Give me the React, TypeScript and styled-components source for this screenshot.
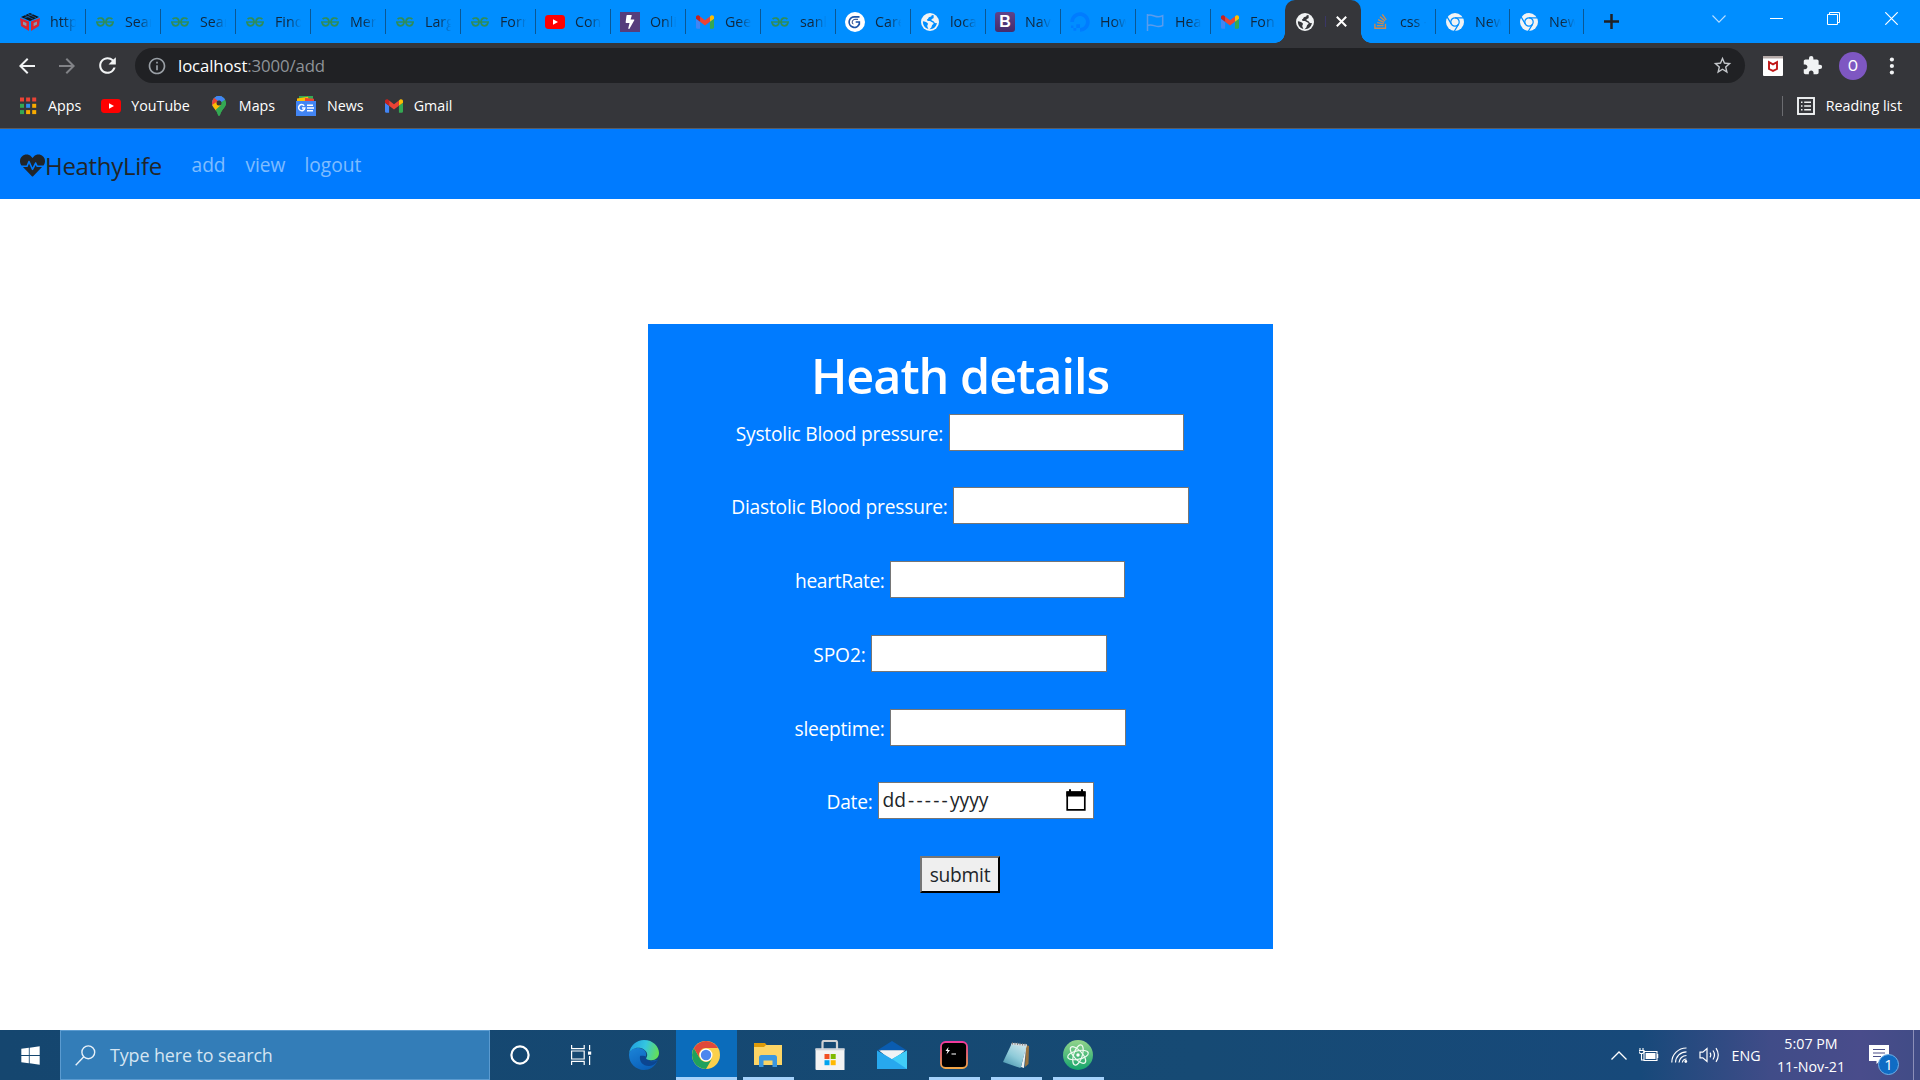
import React from "react";
import styled, { createGlobalStyle, css } from "styled-components";
import {
  MdArrowBack,
  MdArrowForward,
  MdRefresh,
  MdInfoOutline,
  MdStarBorder,
  MdExtension,
} from "react-icons/md";
import { FaHeartbeat, FaDigitalOcean, FaStackOverflow, FaWindows, FaBolt } from "react-icons/fa";

const Global = createGlobalStyle`
  *, *::before, *::after { box-sizing: border-box; }
  html, body { margin: 0; padding: 0; }
  body {
    background: #fff;
    font-family: "Open Sans", "Noto Sans", sans-serif;
    overflow: hidden;
  }
  svg { display: block; flex: none; }
`;

const Screen = styled.div`
  width: 1920px;
  height: 1080px;
  display: flex;
  flex-direction: column;
  background: #fff;
`;

/* ---------- tab strip ---------- */

const TabStrip = styled.div`
  display: flex;
  height: 43px;
  padding-left: 11px;
  background: #008eff;
`;

const Tab = styled.div<{ $w?: number; $last?: boolean }>`
  display: flex;
  align-items: center;
  width: ${(p) => p.$w ?? 75}px;
  height: 43px;
  padding-left: 9px;
  background: ${(p) =>
    p.$last
      ? "none"
      : "linear-gradient(#0b5794, #0b5794) right 0 top 9px / 1.5px 25px no-repeat"};
`;

const Favicon = styled.span`
  display: flex;
  align-items: center;
  justify-content: center;
  width: 20px;
  height: 20px;
  margin-right: 10px;
  flex: none;
`;

const TabTitle = styled.span`
  width: 27px;
  overflow: hidden;
  white-space: nowrap;
  font-size: 14.25px;
  line-height: 22px;
  color: #10273d;
  -webkit-mask-image: linear-gradient(90deg, #000 50%, transparent 98%);
  mask-image: linear-gradient(90deg, #000 50%, transparent 98%);
`;

const ActiveTab = styled.div`
  position: relative;
  display: flex;
  align-items: center;
  width: 76px;
  margin: 0 0 0 -1px;
  height: 43px;
  padding-left: 10px;
  border-radius: 10px 10px 0 0;
  background: #35363a;
  &::before,
  &::after {
    content: "";
    position: absolute;
    bottom: 0;
    width: 10px;
    height: 10px;
  }
  &::before {
    left: -10px;
    background: radial-gradient(circle at 0 0, transparent 9.5px, #35363a 10px);
  }
  &::after {
    right: -10px;
    background: radial-gradient(circle at 100% 0, transparent 9.5px, #35363a 10px);
  }
`;

const ActiveMark = styled.span`
  width: 1px;
  height: 11px;
  margin: 0 10px 0 0;
  background: #3a3768;
`;

const NewTab = styled.div`
  display: flex;
  align-items: center;
  padding-left: 20px;
`;

const WindowControls = styled.div`
  display: flex;
  margin-left: auto;
  height: 37px;
`;

const ControlButton = styled.div`
  display: flex;
  align-items: center;
  justify-content: center;
  width: 57.5px;
`;

/* ---------- toolbar ---------- */

const Toolbar = styled.div`
  display: flex;
  align-items: center;
  height: 45px;
  padding: 0 18px 0 16px;
  background: #35363a;
`;

const NavButton = styled.div<{ $dim?: boolean }>`
  display: flex;
  justify-content: center;
  width: 22px;
  margin-right: 18px;
  color: ${(p) => (p.$dim ? "#828387" : "#f1f3f4")};
`;

const Omnibox = styled.div`
  display: flex;
  align-items: center;
  flex: 1;
  height: 35px;
  margin-left: -1px;
  padding: 0 12px 0 12px;
  border-radius: 18px;
  background: #202124;
  color: #9aa0a6;
`;

const Url = styled.span`
  margin: 0 auto 0 11px;
  font-size: 16.75px;
  letter-spacing: -0.1px;
  line-height: 24px;
  color: #8f9499;
`;

const Host = styled.span`
  color: #fff;
`;

const Extensions = styled.div`
  display: flex;
  align-items: center;
  width: 157px;
  padding-left: 18px;
`;

const Avatar = styled.div`
  display: flex;
  align-items: center;
  justify-content: center;
  width: 28px;
  height: 28px;
  margin: 0 22px 0 16px;
  border-radius: 50%;
  background: #7e57c2;
  color: #fff;
  font-family: Roboto, sans-serif;
  font-size: 15px;
`;

const Puzzle = styled.div`
  margin-left: 19px;
  color: #f1f3f4;
`;

/* ---------- bookmarks ---------- */

const BookmarksBar = styled.div`
  display: flex;
  align-items: center;
  height: 41px;
  padding: 0 18px 4px 19px;
  background: #35363a;
  border-bottom: 1px solid #5b5c60;
`;

const Bookmark = styled.div<{ $gap: number; $after: number }>`
  display: flex;
  align-items: center;
  gap: ${(p) => p.$gap}px;
  margin-right: ${(p) => p.$after}px;
  font-size: 14.25px;
  line-height: 20px;
  white-space: nowrap;
  color: #fff;
`;

const ReadingList = styled.div`
  display: flex;
  align-items: center;
  gap: 11px;
  margin-left: auto;
  padding-left: 14px;
  height: 20px;
  border-left: 1px solid #6b6c70;
  font-size: 14.25px;
  line-height: 18px;
  color: #fff;
`;

/* ---------- page ---------- */

const SiteNav = styled.nav`
  display: flex;
  align-items: center;
  height: 70px;
  padding: 1px 0 0 20px;
  background: #007bff;
`;

const Brand = styled.div`
  display: flex;
  align-items: center;
  width: 171.5px;
  padding-top: 2px;
  font-size: 24px;
  letter-spacing: -0.3px;
  line-height: 32px;
  color: #212529;
`;

const SiteLink = styled.a<{ $w: number }>`
  width: ${(p) => p.$w}px;
  font-size: 19.2px;
  letter-spacing: -0.03px;
  line-height: 30px;
  color: rgba(255, 255, 255, 0.5);
`;

const Page = styled.main`
  display: flex;
  flex: 1;
  justify-content: center;
  align-items: flex-start;
  padding: 125px 0 0 1px;
`;

const Card = styled.form`
  display: flex;
  flex-direction: column;
  align-items: center;
  width: 625px;
  height: 625px;
  padding: 20px 1px 0 0;
  background: #007bff;
`;

const Title = styled.h1`
  margin: 0 0 8.5px;
  padding-top: 1px;
  font-size: 48.5px;
  font-weight: 600;
  letter-spacing: -1px;
  line-height: 60px;
  color: #fff;
`;

const Row = styled.div`
  display: flex;
  height: 73.75px;
`;

const Label = styled.label<{ $w: number; $ls: number }>`
  width: ${(p) => p.$w}px;
  padding-top: 1px;
  white-space: nowrap;
  font-size: 19.2px;
  letter-spacing: ${(p) => p.$ls}px;
  line-height: 37px;
  color: #fff;
`;

const fieldBox = css`
  height: 37px;
  border: 1px solid #767676;
  border-radius: 0;
  background: #fff;
`;

const Field = styled.input`
  ${fieldBox}
  width: 235.5px;
  margin: 0;
  padding: 1px 2px;
  outline: none;
  font: inherit;
`;

const DateField = styled.div`
  ${fieldBox}
  display: flex;
  align-items: center;
  justify-content: space-between;
  width: 216px;
  padding: 0 7px 1px 4px;
  color: #212529;
  font-size: 19.2px;
`;

const DateParts = styled.span`
  display: flex;
  align-items: center;
  line-height: 30px;
`;

const Dashes = styled.span`
  width: 44px;
  padding-left: 2px;
  text-align: center;
  letter-spacing: 2.2px;
`;

const Submit = styled.button`
  width: 80px;
  height: 37px;
  padding: 0 0 1px;
  border: 2px outset #767676;
  border-color: #767676 #212529 #212529 #767676;
  border-radius: 0;
  background: #efefef;
  color: #212529;
  font-family: inherit;
  font-size: 19.2px;
  letter-spacing: -0.25px;
`;

/* ---------- taskbar ---------- */

const Taskbar = styled.footer`
  display: flex;
  height: 50px;
  background: linear-gradient(
    90deg,
    #15466f 0,
    #164a74 1200px,
    #17497a 1640px,
    #404c88 1770px,
    #494c8b 1860px,
    #414c86 1920px
  );
`;

const StartButton = styled.div`
  display: flex;
  align-items: center;
  justify-content: center;
  width: 60px;
  color: #fff;
`;

const SearchBox = styled.div`
  display: flex;
  align-items: center;
  gap: 14px;
  width: 430px;
  padding-left: 14px;
  border: 1px solid #5b9bd0;
  background: #337db8;
  color: #d5e5f2;
  font-size: 17.9px;
  letter-spacing: -0.1px;
`;

const TaskCell = styled.div<{ $w?: number; $active?: boolean; $running?: boolean }>`
  display: flex;
  align-items: center;
  justify-content: center;
  width: ${(p) => p.$w ?? 62}px;
  height: 50px;
  background: ${(p) =>
    p.$active
      ? "linear-gradient(#a5d2fb, #a5d2fb) 1px 47px / 61px 3px no-repeat, linear-gradient(#0b6cbb, #0b6cbb) 1px 0 / 61px 47px no-repeat"
      : p.$running
      ? "linear-gradient(#a5d2fb, #a5d2fb) 6px 47px / 51px 3px no-repeat"
      : "none"};
`;

const Tray = styled.div`
  display: flex;
  margin-left: auto;
  padding-right: 6px;
  color: #fff;
  font-size: 14.25px;
`;

const TrayCell = styled.div<{ $w: number }>`
  display: flex;
  align-items: center;
  justify-content: center;
  width: ${(p) => p.$w}px;
`;

const Clock = styled.div`
  display: flex;
  flex-direction: column;
  align-items: center;
  width: 86px;
  padding-top: 2px;
  line-height: 23px;
`;

const Notifications = styled.div`
  position: relative;
  width: 60px;
  padding: 15px 0 0 15px;
  border-right: 1px solid #8b8fb8;
`;

const Badge = styled.span`
  position: absolute;
  left: 24px;
  top: 24px;
  width: 21px;
  height: 21px;
  border: 1px solid #6fb0e8;
  border-radius: 50%;
  background: #0f6cc4;
  font-size: 15px;
  line-height: 19px;
  text-align: center;
`;

/* ---------- drawings ---------- */

const CubeIcon = () => (
  <svg width="20" height="20" viewBox="0 0 20 20">
    <path d="M1 5 10 1l9 4-9 4z" fill="#10141c" />
    <path d="M5 3.5l8 3.6M8 2.2l8 3.6M4 6.4l9-4.2" stroke="#0d63b0" strokeWidth=".8" />
    <path d="M0 6l9 3.6V19l-8-5z" fill="#d9252f" />
    <path d="M20 6l-9 3.6V19l8-5z" fill="#d9252f" />
    <path d="M3 9.5l3.4 1.6v3.2L3 12.4zM17 9.5l-3.4 1.6v3.2l3.4-1.9z" fill="#8d98ae" />
  </svg>
);

const GfgIcon = () => (
  <svg width="18" height="10" viewBox="0 0 18 10" fill="none" stroke="#2f8d58" strokeWidth="1.7">
    <path d="M1.600 2.200C3.600.200 7.800.600 8 4.800 8 9.700 2 10.400.900 5.200" />
    <path d="M16.400 2.200C14.400.200 10.200.600 10 4.800c0 4.900 6 5.600 7.100.400" />
    <path d="M0 5h18" strokeWidth="1.400" />
  </svg>
);

const YouTubeIcon = () => (
  <svg width="20" height="14" viewBox="0 0 20 14">
    <rect width="20" height="14" rx="3.4" fill="#f00" />
    <path d="M8 4.2v5.6l5-2.8z" fill="#fff" />
  </svg>
);

const GmailIcon = () => (
  <svg width="18" height="14" viewBox="52 42 88 66">
    <path fill="#4285f4" d="M58 108h14V74L52 59v43c0 3.32 2.69 6 6 6" />
    <path fill="#34a853" d="M120 108h14c3.32 0 6-2.69 6-6V59l-20 15" />
    <path fill="#fbbc04" d="M120 48v26l20-15v-8c0-7.42-8.47-11.65-14.4-7.2" />
    <path fill="#ea4335" d="M72 74V48l24 18 24-18v26L96 92" />
    <path fill="#c5221f" d="M52 51v8l20 15V48l-5.6-4.2c-5.94-4.45-14.4-.22-14.4 7.2" />
  </svg>
);

const BoltTile = styled.span`
  display: flex;
  align-items: center;
  justify-content: center;
  width: 20px;
  height: 20px;
  background: #563d7c;
  color: #fff;
`;

const BootstrapTile = styled(BoltTile)`
  border-radius: 3px;
  background: linear-gradient(#5f4389, #452c6b);
  font-family: "Liberation Sans", Arial, sans-serif;
  font-size: 16px;
  font-weight: 700;
`;

const GlobeIcon = ({ hole }: { hole: string }) => (
  <svg width="18" height="18" viewBox="0 0 18 18">
    <circle cx="9" cy="9" r="9" fill="#f1f3f4" />
    <path
      d="M10.8 1.9c-.2 1.5-1 1.6-2.4 2C7 4.300 7.600 6 6.100 6.300c-.6 1.600.9 1.700 2.500 1.800 1.500.1 1.700 1.200 3 1.300 1.200.1 1.300 1.500.2 2.200-1.100.7-.8 1.900-1.500 2.800-.6.900-1.500 1.300-1.900 1.900 3.900.3 7-2.500 7.500-6.200-1.600.4-2.500-.2-3-1.300-.6-1.200-2.400-.7-2.500-2 0-1.100 1.700-1 2.200-1.900.3-.7-.3-1.800.4-2.400z"
      fill={hole}
    />
    <path d="M1.900 8.300c1.900.2 4.500.9 5 2.300.3 1-.7 1.500-.6 2.600.1.900.8 1.400 1 2.700C4 15.200 1.700 12.200 1.900 8.300z" fill={hole} />
  </svg>
);

const GoogleGIcon = () => (
  <svg width="20" height="20" viewBox="0 0 20 20">
    <circle cx="10" cy="10" r="10" fill="#fff" />
    <path d="M14.500 4.800H9.700a5.300 5.300 0 1 0 4.600 7.400V10h-3.600" fill="none" stroke="#1d54a8" strokeWidth="1.700" />
    <path d="M13 7.300H9.900a2.800 2.800 0 0 0-1.700 4.900" fill="none" stroke="#1d3c80" strokeWidth="1" />
  </svg>
);

const FlagIcon = () => (
  <svg width="18" height="18" viewBox="0 0 18 18" fill="none" stroke="#5a9cec" strokeWidth="1.500">
    <path d="M1.500 1v17M1.500 2.500c3-1.500 5 0 7.500.8s4.500 1 7.700-.6v9.800c-3.200 1.500-5.200 1.200-7.700.4s-4.500-1.800-7.500-.4" />
  </svg>
);

const ChromeMono = () => (
  <svg width="18" height="18" viewBox="0 0 18 18">
    <circle cx="9" cy="9" r="9" fill="#f1f3f4" />
    <g fill="none" stroke="#008eff" strokeWidth="1.200">
      <circle cx="9" cy="9" r="4.200" />
      <path d="M9 4.800h8.500M5.400 11.100 1.100 3.900M12.600 11.100 8.300 18.300" />
    </g>
    <circle cx="9" cy="9" r="2.700" fill="#f1f3f4" />
  </svg>
);

const AppsIcon = () => (
  <svg width="18" height="18" viewBox="0 0 18 18">
    {["#ea4335", "#ea4335", "#ea4335", "#34a853", "#2f8cf0", "#f9ab00", "#34a853", "#f9ab00", "#f9ab00"].map((c, i) => (
      <rect key={i} x={1 + (i % 3) * 6.100} y={0.5 + Math.floor(i / 3) * 6.300} width="4" height="4" fill={c} />
    ))}
  </svg>
);

const MapsIcon = () => (
  <svg width="14" height="20" viewBox="0 0 14 20">
    <defs>
      <clipPath id="pin">
        <path d="M7 0a7 7 0 0 1 7 7c0 4.500-4.500 6.500-5.800 11.500-.4 1.600-2 1.600-2.400 0C4.500 13.500 0 11.500 0 7a7 7 0 0 1 7-7z" />
      </clipPath>
    </defs>
    <g clipPath="url(#pin)">
      <path d="M0 0h14v20H0z" fill="#34a853" />
      <path d="M0 12.500 14-3.500V-4H0z" fill="#4285f4" />
      <path d="M0 0l6 5-6 7z" fill="#ea4335" />
      <path d="M0 9l4.500-3L9 9l-6.500 7L0 14z" fill="#fbbc04" />
      <path d="M3 0h11v3L9.500 6 7 4z" fill="#4285f4" />
      <path d="M14 5v15H6L4 13.500z" fill="#34a853" />
    </g>
    <circle cx="7" cy="7" r="2.500" fill="#35363a" />
  </svg>
);

const NewsTile = () => (
  <svg width="20" height="20" viewBox="0 0 20 20">
    <path d="M3 0h14v5H3z" fill="#34a853" />
    <path d="M1 2.500 12 .8l1 5H1z" fill="#fbbc04" />
    <path d="M9 2l9 .8V6H9z" fill="#ea4335" />
    <path d="M0 5h20v15H0z" fill="#4285f4" />
    <path d="M8.200 9.700A3.100 3.100 0 1 0 8.800 12H6" fill="none" stroke="#fff" strokeWidth="1.500" />
    <path d="M11 9.200h6M11 12h7M11 14.800h6" stroke="#fff" strokeWidth="1.500" />
  </svg>
);

const McAfee = () => (
  <svg width="20" height="20" viewBox="0 0 20 20">
    <rect width="20" height="20" rx="1" fill="#fff" />
    <path d="M0 0h20v2.500H0z" fill="#b5aaa8" />
    <path d="M6 6.200v6.800l4 1.900 4-1.900V6.200l-4 2.200z" fill="none" stroke="#c01818" strokeWidth="1.900" />
  </svg>
);

const ReadingIcon = () => (
  <svg width="18" height="18" viewBox="0 0 18 18" stroke="#f1f3f4" fill="none">
    <rect x="1" y="1" width="16" height="16" strokeWidth="1.900" />
    <path d="M4 5.300h1.500M7.200 5.300H14M4 9h1.500M7.200 9H14M4 12.700h1.500M7.200 12.700H14" strokeWidth="1.600" />
  </svg>
);

const CalendarIcon = () => (
  <svg width="20" height="22" viewBox="0 0 20 22">
    <path d="M1.200 3.200h17.600v17.600H1.200z" fill="none" stroke="#000" strokeWidth="1.700" />
    <path d="M.4 2.400h19.200v5H.4zM3 .3h2v3H3zM15 .3h2v3h-2z" fill="#000" />
  </svg>
);

const Magnifier = () => (
  <svg width="21" height="21" viewBox="0 0 21 21" fill="none" stroke="#e8f1f9" strokeWidth="1.400">
    <circle cx="13.300" cy="7.300" r="6.400" />
    <path d="M8.800 11.800.7 20.200" />
  </svg>
);

const Cortana = () => (
  <svg width="20" height="20" viewBox="0 0 20 20">
    <circle cx="10" cy="10" r="8.600" fill="none" stroke="#fff" strokeWidth="2.200" />
  </svg>
);

const TaskView = () => (
  <svg width="21" height="20" viewBox="0 0 21 20" fill="none" stroke="#fff" strokeWidth="1.200">
    <path d="M.6 0v3.600h12.600V0M.6 20v-3.600h12.600V20M.6 6h12.600v8H.6zM18.600 0v5M18.600 11v9" />
    <path d="M17 6.500h3.200v3.200H17z" fill="#fff" stroke="none" />
  </svg>
);

const EdgeIcon = () => (
  <svg width="30" height="30" viewBox="0 0 30 30">
    <defs>
      <linearGradient id="edgeTop" x1="0" y1=".4" x2="1" y2=".6">
        <stop offset="0" stopColor="#1f9fe0" />
        <stop offset=".5" stopColor="#35c6e0" />
        <stop offset="1" stopColor="#66e052" />
      </linearGradient>
      <linearGradient id="edgeLow" x1="0" y1="0" x2=".6" y2="1">
        <stop offset="0" stopColor="#1b84d8" />
        <stop offset="1" stopColor="#0a5fb8" />
      </linearGradient>
    </defs>
    <path d="M0 15C0 11 4 7.500 9.500 8c6 .5 8.500 4.500 7.500 7.500-1.500 3 .5 5.500 5 5.500 3 0 5.500-1 6.500-.5C26 27 20.500 30 15 30 7 30 0 23.500 0 15z" fill="url(#edgeLow)" />
    <path d="M11 16c-1 6 3.500 10.500 9.500 10 3.500-.3 6-2 8-5 .2-.6-.3-.9-.9-.6C24 22.300 17 21 17 17c0-1.500-6-1.500-6-1z" fill="#0c4590" />
    <path d="M.1 13.500C1 5.500 7.500 0 15 0c9 0 15 6.500 15 13 0 4.500-3.500 7.200-7.500 7.200-3.500 0-5.800-1-5.300-2.200 2-2.700 1-6.500-2.500-8.700C9 6 2 8.500.1 13.500z" fill="url(#edgeTop)" />
  </svg>
);

const ChromeIcon = () => (
  <svg width="28" height="28" viewBox="0 0 28 28">
    <circle cx="14" cy="14" r="14" fill="#fbd04c" />
    <path d="M1.900 7A14 14 0 0 0 14 28l6.100-10.500A7 7 0 0 1 8 17.500z" fill="#1fa15d" />
    <path d="M1.900 7A14 14 0 0 1 26.100 7H14a7 7 0 0 0-6.100 10.500z" fill="#e0493b" />
    <circle cx="14" cy="14" r="6.500" fill="#fff" />
    <circle cx="14" cy="14" r="5.200" fill="#4b87ee" />
  </svg>
);

const FolderIcon = () => (
  <svg width="28" height="24" viewBox="0 0 28 24">
    <path d="M0 0h11l2 2.500V6H0z" fill="#dd9a08" />
    <path d="M0 4h10l2-2h16v20H0z" fill="#fcd566" />
    <path d="M5 24V14.500Q5 12 7.500 12h13Q23 12 23 14.500V24h-4.500v-6.500h-9V24z" fill="#3a97e0" />
  </svg>
);

const StoreIcon = () => (
  <svg width="30" height="30" viewBox="0 0 30 30">
    <path d="M7.500 9V2.500Q7.500 1 9 1h11.500Q22 1 22 2.500V9" fill="none" stroke="#cfd1d4" strokeWidth="2.200" />
    <path d="M.5 8.500h29V30h-28q-1 0-1-1z" fill="#f3f3f3" />
    <path d="M.5 8.500h29v1.800H.5z" fill="#cfd3d8" />
    <path d="M9.500 14h5v5h-5z" fill="#f25022" />
    <path d="M15.700 14h5v5h-5z" fill="#7fba00" />
    <path d="M9.500 20.200h5v5h-5z" fill="#00a4ef" />
    <path d="M15.700 20.200h5v5h-5z" fill="#ffb900" />
  </svg>
);

const MailIcon = () => (
  <svg width="30" height="28" viewBox="0 0 30 28">
    <path d="M0 9.500 15 0l15 9.500z" fill="#0a5cb0" />
    <path d="M2 9.500h26L15 20z" fill="#f1f3f5" />
    <path d="M0 9.500 15 18l15-8.500V28H0z" fill="#27a8ee" />
    <path d="M3.500 9.500h23L15 18z" fill="#f1f3f5" />
    <path d="M30 9.500V28L15 18z" fill="#41cdf8" />
  </svg>
);

const TerminalIcon = () => (
  <svg width="28" height="28" viewBox="0 0 28 28">
    <defs>
      <linearGradient id="hyper" x1="0" y1="0" x2="0" y2="1">
        <stop offset="0" stopColor="#f0399c" />
        <stop offset="1" stopColor="#f2a646" />
      </linearGradient>
    </defs>
    <rect x="1" y="1" width="26" height="26" rx="4.500" fill="#000" stroke="url(#hyper)" strokeWidth="1.800" />
    <path d="M8.500 6 5.500 10h2l-1 3.500L10 9H8z" fill="#fff" />
    <path d="M11.500 13h4.500" stroke="#ddd" strokeWidth="1.200" />
  </svg>
);

const NotepadIcon = () => (
  <svg width="28" height="28" viewBox="0 0 28 28">
    <defs>
      <linearGradient id="note" x1="0" y1="1" x2=".6" y2="0">
        <stop offset="0" stopColor="#3c8ca6" />
        <stop offset=".55" stopColor="#8fcbd9" />
        <stop offset="1" stopColor="#c4e2e9" />
      </linearGradient>
    </defs>
    <path d="M24 4l3 1-.5 18-3.500 3z" fill="#9a7440" />
    <path d="M24.500 3 22 27l-3-1z" fill="#eef2f3" />
    <path d="M10 2l15 1.500L18.500 27 1 21z" fill="url(#note)" />
    <path d="M10 2l15 1.500-.5 2L9 3.800z" fill="#d7dbdd" />
    <path d="M10.500 1v2.500M13 1.200v2.500M15.500 1.500V4M18 1.700v2.500M20.500 2v2.500M23 2.200v2.500" stroke="#6d6d6d" strokeWidth=".8" />
  </svg>
);

const AtomIcon = () => (
  <svg width="30" height="30" viewBox="0 0 30 30">
    <defs>
      <linearGradient id="atom" x1="0" y1="0" x2="0" y2="1">
        <stop offset="0" stopColor="#93d48b" />
        <stop offset="1" stopColor="#14a56d" />
      </linearGradient>
    </defs>
    <circle cx="15" cy="15" r="15" fill="url(#atom)" />
    <g fill="none" stroke="#effaf0" strokeWidth="1.200">
      <ellipse cx="15" cy="15" rx="10.500" ry="4.300" transform="rotate(-12 15 15)" />
      <ellipse cx="15" cy="15" rx="10.500" ry="4.300" transform="rotate(48 15 15)" />
      <ellipse cx="15" cy="15" rx="10.500" ry="4.300" transform="rotate(108 15 15)" />
    </g>
    <circle cx="15" cy="15" r="1.700" fill="#fff" />
  </svg>
);

const BatteryIcon = () => (
  <svg width="20" height="14" viewBox="0 0 20 14" fill="none" stroke="#fff">
    <path d="M5 3.500h13v9H5zM18.700 6v4" strokeWidth="1.100" />
    <path d="M6.600 5h9.900v6H6.600z" fill="#fff" stroke="none" />
    <path d="M1 0v2M4 0v2M0 2.500h5v2l-1.500 1h-2L0 4.500zM2.500 5.500V12H5" strokeWidth="1.100" />
  </svg>
);

const WifiIcon = () => (
  <svg width="17" height="16" viewBox="0 0 17 16" fill="none" stroke="#fff" strokeWidth="1.200">
    <path d="M.8 15.500A14.500 14.500 0 0 1 15.500 1M4.500 15.500A11 11 0 0 1 15.500 4.800M8 15.500a7.500 7.500 0 0 1 7.500-7M11.300 15.500a4.300 4.300 0 0 1 4.200-3.500" />
    <circle cx="14.800" cy="14.500" r="1.400" fill="#fff" stroke="none" />
  </svg>
);

const VolumeIcon = () => (
  <svg width="21" height="18" viewBox="0 0 21 18" fill="none" stroke="#fff" strokeWidth="1.200">
    <path d="M1 6.200h2.800L8 2.500v13l-4.200-3.700H1z" />
    <path d="M11 6.700q1.500 2.300 0 4.600M14 4.500q3 4.500 0 9M17 2.200q4.500 6.800 0 13.600" />
  </svg>
);

const NoticeIcon = () => (
  <svg width="20" height="19" viewBox="0 0 20 19">
    <path d="M0 0h20v16H11l-3.500 3v-3H0z" fill="#fff" />
    <path d="M4 4.500h12M4 8h12M4 11.500h8" stroke="#4a4f88" strokeWidth="1.200" />
  </svg>
);

/* ---------- data ---------- */

const tabs: { icon: React.ReactNode; title: string }[] = [
  { icon: <CubeIcon />, title: "http" },
  { icon: <GfgIcon />, title: "Sear" },
  { icon: <GfgIcon />, title: "Sear" },
  { icon: <GfgIcon />, title: "Find" },
  { icon: <GfgIcon />, title: "Mer" },
  { icon: <GfgIcon />, title: "Larg" },
  { icon: <GfgIcon />, title: "Forr" },
  { icon: <YouTubeIcon />, title: "Con" },
  { icon: <BoltTile><FaBolt size={14} /></BoltTile>, title: "Onli" },
  { icon: <GmailIcon />, title: "Gee" },
  { icon: <GfgIcon />, title: "sanl" },
  { icon: <GoogleGIcon />, title: "Care" },
  { icon: <GlobeIcon hole="#008eff" />, title: "loca" },
  { icon: <BootstrapTile>B</BootstrapTile>, title: "Nav" },
  { icon: <FaDigitalOcean size={20} color="#007cff" />, title: "How" },
  { icon: <FlagIcon />, title: "Hea" },
  { icon: <GmailIcon />, title: "Fon" },
];

const trailingTabs = [
  { icon: <FaStackOverflow size={17} color="#d08a4c" />, title: "css -", w: 75 },
  { icon: <ChromeMono />, title: "New", w: 74 },
  { icon: <ChromeMono />, title: "New", w: 74 },
];

const fields = [
  { label: "Systolic Blood pressure:", w: 213, ls: -0.22 },
  { label: "Diastolic Blood pressure:", w: 222, ls: -0.22 },
  { label: "heartRate:", w: 94.5, ls: -0.35 },
  { label: "SPO2:", w: 58, ls: -0.1 },
  { label: "sleeptime:", w: 95.5, ls: -0.25 },
];

export default function App() {
  return (
    <Screen>
      <Global />
      <TabStrip>
        {tabs.map((t, i) => (
          <Tab key={i} $last={i === tabs.length - 1}>
            <Favicon>{t.icon}</Favicon>
            <TabTitle>{t.title}</TabTitle>
          </Tab>
        ))}
        <ActiveTab>
          <Favicon><GlobeIcon hole="#35363a" /></Favicon>
          <ActiveMark />
          <svg width="11" height="11" viewBox="0 0 11 11" stroke="#fff" strokeWidth="2">
            <path d="M.8.800l9.400 9.400M10.200.8.800 10.200" />
          </svg>
        </ActiveTab>
        {trailingTabs.map((t, i) => (
          <Tab key={i} $w={t.w}>
            <Favicon>{t.icon}</Favicon>
            <TabTitle>{t.title}</TabTitle>
          </Tab>
        ))}
        <NewTab>
          <svg width="15" height="15" viewBox="0 0 15 15" stroke="#202124" strokeWidth="2.500">
            <path d="M7.500 0v15M0 7.500h15" />
          </svg>
        </NewTab>
        <WindowControls>
          <ControlButton>
            <svg width="14" height="8" viewBox="0 0 14 8" fill="none" stroke="#b9deff" strokeWidth="1.100">
              <path d="M.5.500 7 7.200 13.500.5" />
            </svg>
          </ControlButton>
          <ControlButton>
            <svg width="13" height="1" viewBox="0 0 13 1"><path d="M0 0h13v1H0z" fill="#fff" /></svg>
          </ControlButton>
          <ControlButton>
            <svg width="13" height="13" viewBox="0 0 13 13" fill="none" stroke="#fff">
              <path d="M.5 2.500h10v10H.5zM2.500 2.500v-2h10v10h-2" />
            </svg>
          </ControlButton>
          <ControlButton>
            <svg width="13" height="13" viewBox="0 0 13 13" stroke="#fff" strokeWidth="1.200">
              <path d="M.3.300l12.400 12.400M12.700.300.300 12.700" />
            </svg>
          </ControlButton>
        </WindowControls>
      </TabStrip>

      <Toolbar>
        <NavButton><MdArrowBack size={24} /></NavButton>
        <NavButton $dim><MdArrowForward size={24} /></NavButton>
        <NavButton><MdRefresh size={25} /></NavButton>
        <Omnibox>
          <MdInfoOutline size={20} />
          <Url><Host>localhost</Host>:3000/add</Url>
          <MdStarBorder size={21} color="#c4c7cb" />
        </Omnibox>
        <Extensions>
          <McAfee />
          <Puzzle><MdExtension size={21} /></Puzzle>
          <Avatar>O</Avatar>
          <svg width="5" height="18" viewBox="0 0 5 18" fill="#f1f3f4">
            <circle cx="2.900" cy="2.500" r="2.100" />
            <circle cx="2.900" cy="9" r="2.100" />
            <circle cx="2.900" cy="15.500" r="2.100" />
          </svg>
        </Extensions>
      </Toolbar>

      <BookmarksBar>
        <Bookmark $gap={11} $after={20}><AppsIcon />Apps</Bookmark>
        <Bookmark $gap={10} $after={22}><YouTubeIcon />YouTube</Bookmark>
        <Bookmark $gap={13} $after={21}><MapsIcon />Maps</Bookmark>
        <Bookmark $gap={11} $after={21}><NewsTile />News</Bookmark>
        <Bookmark $gap={11} $after={0}><GmailIcon />Gmail</Bookmark>
        <ReadingList><ReadingIcon />Reading list</ReadingList>
      </BookmarksBar>

      <SiteNav>
        <Brand><FaHeartbeat size={25} />HeathyLife</Brand>
        <SiteLink $w={54}>add</SiteLink>
        <SiteLink $w={59}>view</SiteLink>
        <SiteLink $w={70}>logout</SiteLink>
      </SiteNav>

      <Page>
        <Card>
          <Title>Heath details</Title>
          {fields.map((f) => (
            <Row key={f.label}>
              <Label $w={f.w} $ls={f.ls}>{f.label}</Label>
              <Field type="text" />
            </Row>
          ))}
          <Row>
            <Label $w={51} $ls={-0.25}>Date:</Label>
            <DateField>
              <DateParts>dd<Dashes>-----</Dashes>yyyy</DateParts>
              <CalendarIcon />
            </DateField>
          </Row>
          <Submit type="button">submit</Submit>
        </Card>
      </Page>

      <Taskbar>
        <StartButton><FaWindows size={21} /></StartButton>
        <SearchBox><Magnifier />Type here to search</SearchBox>
        <TaskCell $w={60}><Cortana /></TaskCell>
        <TaskCell $w={63}><TaskView /></TaskCell>
        <TaskCell><EdgeIcon /></TaskCell>
        <TaskCell $active><ChromeIcon /></TaskCell>
        <TaskCell $running><FolderIcon /></TaskCell>
        <TaskCell><StoreIcon /></TaskCell>
        <TaskCell><MailIcon /></TaskCell>
        <TaskCell $running><TerminalIcon /></TaskCell>
        <TaskCell $running><NotepadIcon /></TaskCell>
        <TaskCell $running><AtomIcon /></TaskCell>
        <Tray>
          <TrayCell $w={30}>
            <svg width="16" height="9" viewBox="0 0 16 9" fill="none" stroke="#fff" strokeWidth="1.300">
              <path d="M.5 8.500 8 1l7.500 7.500" />
            </svg>
          </TrayCell>
          <TrayCell $w={30}><BatteryIcon /></TrayCell>
          <TrayCell $w={30}><WifiIcon /></TrayCell>
          <TrayCell $w={30}><VolumeIcon /></TrayCell>
          <TrayCell $w={44}>ENG</TrayCell>
          <Clock><span>5:07 PM</span><span>11-Nov-21</span></Clock>
          <Notifications><NoticeIcon /><Badge>1</Badge></Notifications>
        </Tray>
      </Taskbar>
    </Screen>
  );
}
